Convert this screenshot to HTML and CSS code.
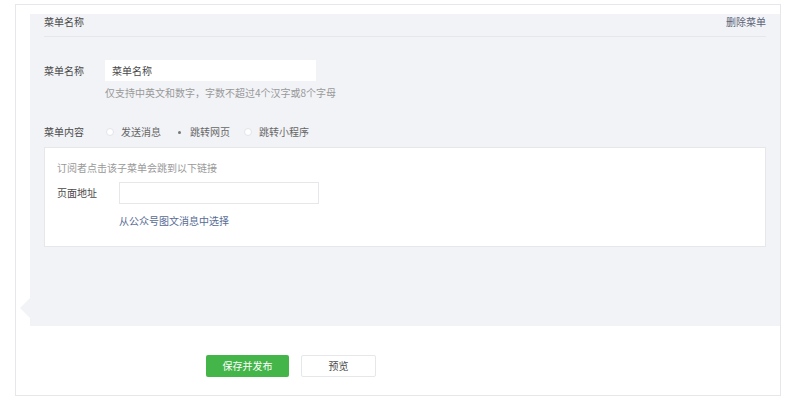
FILE: index.html
```html
<!DOCTYPE html>
<html lang="zh-CN">
<head>
<meta charset="utf-8">
<title>菜单编辑</title>
<link rel="stylesheet" href="styles.css">
</head>
<body>
<div class="frame">
  <div class="panel">
    <div class="panel-head">
      <span class="head-title">菜单名称</span>
      <a class="head-link">删除菜单</a>
    </div>
    <div class="row row-name">
      <span class="label">菜单名称</span>
      <div class="input input-name">菜单名称</div>
    </div>
    <div class="hint">仅支持中英文和数字，字数不超过4个汉字或8个字母</div>
    <div class="row row-radio">
      <span class="label">菜单内容</span>
      <span class="radio"><i class="dot"></i>发送消息</span>
      <span class="radio"><i class="dot checked"></i>跳转网页</span>
      <span class="radio"><i class="dot"></i>跳转小程序</span>
    </div>
    <div class="box">
      <div class="box-tip">订阅者点击该子菜单会跳到以下链接</div>
      <div class="row row-url">
        <span class="label label-url">页面地址</span>
        <div class="input input-url"></div>
      </div>
      <a class="pick">从公众号图文消息中选择</a>
    </div>
  </div>
  <div class="actions">
    <span class="btn btn-primary">保存并发布</span>
    <span class="btn btn-default">预览</span>
  </div>
</div>
</body>
</html>
```
FILE: styles.css
```css
* { box-sizing: border-box; }
body {
  margin: 0;
  background: #fff;
  font-family: "Noto Sans CJK SC", "Noto Sans", sans-serif;
  font-size: 10px;
  line-height: 16px;
  color: #4a4a4a;
}
.frame {
  margin: 4px 0 0 15px;
  width: 766px;
  height: 392px;
  border: 1px solid #e7e7eb;
  padding: 9px 0 0 14px;
}
.panel {
  position: relative;
  background: #f2f3f7;
  height: 312px;
  padding: 0 14px;
}
.panel::before {
  content: "";
  position: absolute;
  left: -10px;
  bottom: 8px;
  border-style: solid;
  border-width: 10px 10px 10px 0;
  border-color: transparent #f2f3f7 transparent transparent;
}
.panel-head {
  display: flex;
  justify-content: space-between;
  padding-bottom: 6px;
  border-bottom: 1px solid #e7e7eb;
}
.head-link { color: #5b6479; }
.row { display: flex; align-items: center; }
.label { width: 61px; flex: none; }
.row-name { margin-top: 23px; }
.input {
  background: #fff;
  height: 21px;
  line-height: 21px;
}
.input-name { width: 211px; padding-left: 7px; }
.hint { margin: 4px 0 0 61px; color: #999; }
.row-radio { margin-top: 23px; }
.row-radio .label { width: 62px; }
.radio { display: flex; align-items: center; margin-right: 14px; color: #666; }
.dot {
  width: 8px;
  height: 8px;
  border-radius: 50%;
  background: #fff;
  border: 1px solid #e2e4ea;
  margin-right: 7px;
  position: relative;
}
.dot.checked { background: transparent; border-color: transparent; }
.dot.checked::after {
  content: "";
  position: absolute;
  left: 1.5px;
  top: 1.5px;
  width: 3px;
  height: 3px;
  border-radius: 50%;
  background: #777;
}
.box {
  margin-top: 7px;
  height: 100px;
  background: #fff;
  border: 1px solid #e7e7eb;
  padding: 12px 12px 0;
}
.box-tip { color: #999; }
.row-url { margin-top: 6px; }
.label-url { width: 62px; }
.input-url {
  width: 200px;
  height: 22px;
  border: 1px solid #e7e7eb;
}
.pick {
  display: block;
  margin: 9px 0 0 62px;
  color: #576b95;
}
.actions {
  display: flex;
  gap: 12px;
  margin: 29px 0 0 176px;
}
.btn {
  height: 22px;
  line-height: 22px;
  text-align: center;
  border-radius: 2px;
}
.btn-primary {
  width: 83px;
  background: #44b549;
  color: #fff;
}
.btn-default {
  width: 75px;
  background: #fff;
  border: 1px solid #e4e8eb;
  line-height: 20px;
  color: #4a4a4a;
}
```
